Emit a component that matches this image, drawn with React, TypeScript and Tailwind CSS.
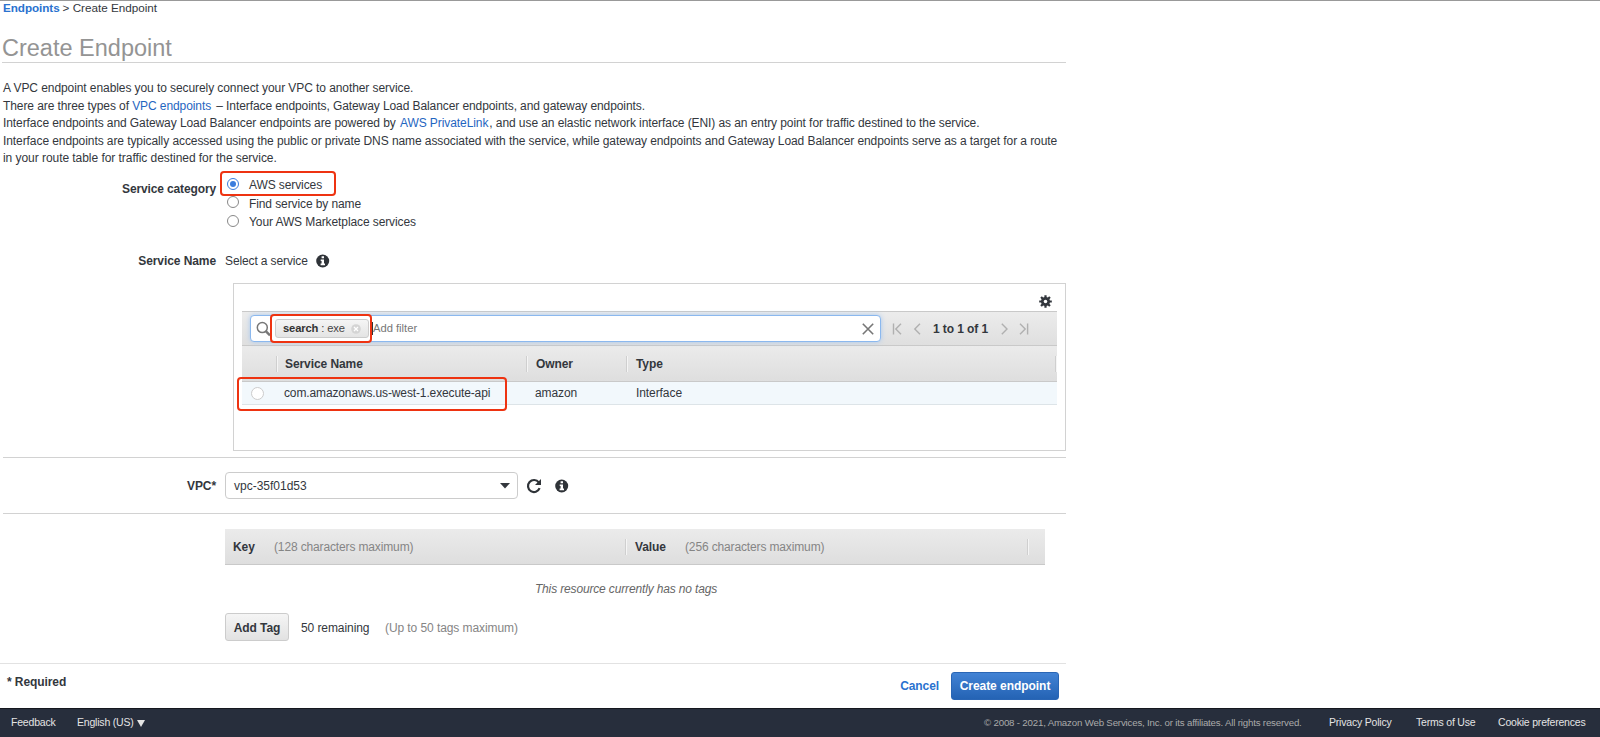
import React, { useState } from 'react';

const CATEGORIES = ['AWS services', 'Find service by name', 'Your AWS Marketplace services'];

const FOOTER_LINKS = [
  { label: 'Privacy Policy', className: 'ml-[27px] w-[63px]' },
  { label: 'Terms of Use', className: 'ml-[24px] w-[60px]' },
  { label: 'Cookie preferences', className: 'ml-[22px] w-[88px]' },
];

function InfoIcon() {
  return (
    <svg viewBox="0 0 14 14" className="h-[14px] w-[14px] shrink-0">
      <circle cx="6.7" cy="7" r="6.5" fill="#2f3338" />
      <path d="M5.6 2.3H8v2H5.6zM4.7 5.5H8v4.1h1v1.6H4.6V9.6h1V7h-.9z" fill="#fff" />
    </svg>
  );
}

function GearIcon() {
  return (
    <svg viewBox="0 0 14 14" className="h-[13px] w-[13px]">
      <g stroke="#33373d" strokeWidth="2.4">
        <path d="M7 .2v13.6M.2 7h13.6M2.2 2.2l9.6 9.6M11.8 2.2l-9.6 9.6" />
      </g>
      <circle cx="7" cy="7" r="4.9" fill="#33373d" />
      <circle cx="7" cy="7" r="1.9" fill="#fff" />
    </svg>
  );
}

function Highlight({ className }: { className: string }) {
  return <div className={`pointer-events-none absolute rounded-[4px] border-2 border-[#ee3311] ${className}`} />;
}

function Divider({ className = '' }: { className?: string }) {
  return <span className={`h-4 w-[2px] shrink-0 border-l border-[#cfcfcf] bg-[#f5f5f5] ${className}`} />;
}

function ServiceTable() {
  return (
    <section className="relative ml-[233px] h-[168px] w-[833px] border border-[#d2d2d2] pl-[8px] pr-2">
      <div className="flex h-[27px] items-end justify-end pr-[5px] pb-[3px]">
        <GearIcon />
      </div>

      <div className="flex h-[35px] items-center border-t border-b border-[#c9c9c9] bg-gradient-to-b from-[#ececec] to-[#dfdfdf] pl-[8px]">
        <div className="flex h-[27px] w-[631px] items-center rounded-[4px] border border-[#8bb8ee] bg-white pl-[5px] pr-[6px] shadow-[0_0_5px_#a9c8ee]">
          <svg viewBox="0 0 16 16" className="h-4 w-4 shrink-0" fill="none" stroke="#777">
            <circle cx="6.3" cy="6.6" r="5" strokeWidth="1.5" />
            <path d="M10 10.4l4 4" strokeWidth="2.4" />
          </svg>
          <div className="ml-[3px] flex h-[19px] w-[94px] items-center rounded-[3px] border border-[#ccc] bg-gradient-to-b from-[#f5f5f5] to-[#e4e4e4] pl-[7px] text-[11.2px] tracking-[-0.13px] text-[#444]">
            <b className="mr-[3px] text-[#333]">search</b> : exe
            <svg viewBox="0 0 10 10" className="ml-[6px] h-[10px] w-[10px]">
              <circle cx="5" cy="5" r="4.8" fill="#d4d4d4" />
              <path d="M3 3l4 4M7 3L3 7" stroke="#fff" strokeWidth="1.3" />
            </svg>
          </div>
          <span className="ml-[3px] h-[13px] w-px bg-[#333]" />
          <span className="flex-1 text-[11.2px] tracking-normal text-[#777]">Add filter</span>
          <svg viewBox="0 0 12 12" className="h-3 w-3" fill="none" stroke="#777" strokeWidth="1.6">
            <path d="M.8.8l10.4 10.4M11.2.8L.8 11.2" />
          </svg>
        </div>
        <svg viewBox="0 0 30 12" className="ml-[11px] h-3 w-[30px]" fill="none" stroke="#b0b0b0" strokeWidth="1.4">
          <path d="M1.5.5v11M9 .8L3.8 6 9 11.2M28 .8L22.8 6 28 11.2" />
        </svg>
        <b className="ml-[11px] w-[55px] whitespace-nowrap text-[12px]">1 to 1 of 1</b>
        <svg viewBox="0 0 30 12" className="ml-[12px] h-3 w-[30px]" fill="none" stroke="#b0b0b0" strokeWidth="1.4">
          <path d="M1.8.8L7 6l-5.2 5.2M20 .8L25.2 6 20 11.2M27.6.5v11" />
        </svg>
      </div>

      <div className="flex h-[36px] items-center border-b border-[#c9c9c9] bg-gradient-to-b from-[#ebebeb] to-[#dedede] font-bold">
        <Divider className="ml-[34px]" />
        <span className="ml-[7px] w-[241px]">Service Name</span>
        <Divider />
        <span className="ml-2 w-[90px]">Owner</span>
        <Divider />
        <span className="ml-2 flex-1">Type</span>
        <Divider />
      </div>
      <div className="flex h-[23px] items-center border-b border-[#dde4e8] bg-[#f2f8fc]">
        <span className="ml-[9px] h-[13px] w-[13px] rounded-full border border-[#ccc] bg-white" />
        <span className="ml-[20px] w-[251px] tracking-[-0.13px]">com.amazonaws.us-west-1.execute-api</span>
        <span className="w-[101px]">amazon</span>
        <span>Interface</span>
      </div>

      <Highlight className="left-[36px] top-[30px] h-[29px] w-[102px]" />
      <Highlight className="left-[3px] top-[93px] h-[34px] w-[270px]" />
    </section>
  );
}

export default function App() {
  const [category, setCategory] = useState(0);

  return (
    <div className="flex h-[737px] w-[1600px] flex-col overflow-hidden border-t border-[#999] bg-white font-['Liberation_Sans',Arial,sans-serif] text-[12px] tracking-[-0.08px] text-[#33373d]">
      <main className="h-[707px] w-[1066px]">
        <nav className="flex h-[14px] items-center pl-[3px] text-[11.7px] tracking-[-0.01px]">
          <a className="mr-[3px] font-bold tracking-[-0.06px] text-[#2a72cf]">Endpoints</a> &gt; Create Endpoint
        </nav>
        <h1 className="ml-[2px] h-[48px] border-b border-[#d2d2d2] pt-[18px] text-[23.5px] leading-[30px] tracking-normal text-[#949494]">Create Endpoint</h1>

        <div className="mt-[17px] ml-[3px] h-[88px] whitespace-nowrap leading-[17.6px]">
          <p>A VPC endpoint enables you to securely connect your VPC to another service.</p>
          <p className="tracking-[-0.09px]">There are three types of <a className="mr-[2px] text-[#1f66c1]">VPC endpoints</a> – Interface endpoints, Gateway Load Balancer endpoints, and gateway endpoints.</p>
          <p>Interface endpoints and Gateway Load Balancer endpoints are powered by <a className="mx-px text-[#1f66c1]">AWS PrivateLink</a>, and use an elastic network interface (ENI) as an entry point for traffic destined to the service.</p>
          <p>Interface endpoints are typically accessed using the public or private DNS name associated with the service, while gateway endpoints and Gateway Load Balancer endpoints serve as a target for a route</p>
          <p className="tracking-[-0.05px]">in your route table for traffic destined for the service.</p>
        </div>

        <div className="relative mt-[8px] flex h-[56px]">
          <b className="w-[216px] pt-[4px] text-right tracking-[-0.13px]">Service category</b>
          <div className="ml-[11px]">
            {CATEGORIES.map((name, i) => (
              <label key={name} className="flex h-[18.4px] items-center" onClick={() => setCategory(i)}>
                <span
                  className={`mb-[2.5px] flex h-[12px] w-[12px] items-center justify-center rounded-full border bg-white ${
                    i === category ? 'border-[#3b7ddd]' : 'border-[#888]'
                  }`}
                >
                  {i === category && <span className="h-[6px] w-[6px] rounded-full bg-[#3b7ddd]" />}
                </span>
                <span className="ml-[10px] tracking-[-0.1px]">{name}</span>
              </label>
            ))}
          </div>
          <Highlight className="left-[220px] -top-[5px] h-[25px] w-[116px]" />
        </div>

        <div className="mt-[20px] flex h-[18px] items-center">
          <b className="w-[216px] text-right">Service Name</b>
          <span className="ml-[9px] mr-[8px] w-[83px] whitespace-nowrap tracking-[-0.12px]">Select a service</span>
          <InfoIcon />
        </div>

        <div className="mt-[13px]">
          <ServiceTable />
        </div>

        <div className="mt-[6px] ml-[3px] flex h-[57px] items-center border-t border-b border-[#d2d2d2]">
          <b className="w-[213px] text-right">VPC*</b>
          <div className="ml-[9px] flex h-[27px] w-[293px] items-center justify-between rounded-[4px] border border-[#ccc] pl-[8px] pr-[7px] tracking-normal">
            vpc-35f01d53
            <svg viewBox="0 0 10 6" className="h-[6px] w-[10px]">
              <path d="M0 0h10L5 5.6z" fill="#33373d" />
            </svg>
          </div>
          <svg viewBox="0 0 16 16" className="ml-[8px] mr-[13px] h-4 w-4" fill="none">
            <path d="M12.8 4.4A6 6 0 1 0 13.6 10.2" stroke="#2f3338" strokeWidth="2.2" />
            <path d="M15 1v6H9z" fill="#2f3338" />
          </svg>
          <InfoIcon />
        </div>

        <section className="mt-[15px] ml-[225px] w-[820px]">
          <div className="flex h-[36px] items-center border-b border-[#c9c9c9] bg-gradient-to-b from-[#ebebeb] to-[#dedede] pl-2">
            <b className="w-[41px]">Key</b>
            <span className="w-[351px] tracking-[-0.14px] text-[#858585]">(128 characters maximum)</span>
            <Divider />
            <b className="ml-2 w-[50px]">Value</b>
            <span className="flex-1 tracking-[-0.14px] text-[#858585]">(256 characters maximum)</span>
            <Divider className="mr-[16px]" />
          </div>
          <p className="flex h-[48px] items-center justify-center pr-[18px] tracking-[-0.15px] italic text-[#666]">This resource currently has no tags</p>
          <div className="flex h-[28px] items-center">
            <button className="h-[28px] w-[64px] rounded-[3px] border border-[#ccc] bg-gradient-to-b from-[#f5f5f5] to-[#e2e2e2] pt-px font-bold">Add Tag</button>
            <span className="ml-[12px] w-[84px] pt-px">50 remaining</span>
            <span className="pt-px text-[#858585]">(Up to 50 tags maximum)</span>
          </div>
        </section>

        <div className="mt-[22px] flex h-[44px] justify-between border-t border-[#e2e2e2] pl-[7px] pr-[7px] pt-[8px]">
          <b className="pt-px">* Required</b>
          <div className="flex h-[28px] items-center">
            <a className="mr-[12px] font-bold text-[#2a72cf]">Cancel</a>
            <button className="h-[28px] w-[108px] rounded-[3px] border border-[#2a66b5] bg-gradient-to-b from-[#4283d5] to-[#2463b4] font-bold tracking-[-0.04px] text-white">Create endpoint</button>
          </div>
        </div>
      </main>

      <footer className="flex h-[29px] items-center border-t border-[#15181f] bg-[#272e3c] pl-[11px] text-[10.5px] tracking-[-0.2px] whitespace-nowrap text-[#e4e4e4]">
        <a className="w-[66px]">Feedback</a>
        <a className="w-[55px]">English (US)</a>
        <svg viewBox="0 0 8 7" className="ml-[5px] h-[7px] w-[8px]">
          <path d="M0 0h8L4 7z" fill="#e4e4e4" />
        </svg>
        <span className="ml-auto w-[318px] text-[9.7px] tracking-[-0.18px] text-[#aaa]">© 2008 - 2021, Amazon Web Services, Inc. or its affiliates. All rights reserved.</span>
        {FOOTER_LINKS.map((link) => (
          <a key={link.label} className={link.className}>{link.label}</a>
        ))}
        <span className="w-[14px]" />
      </footer>
    </div>
  );
}
